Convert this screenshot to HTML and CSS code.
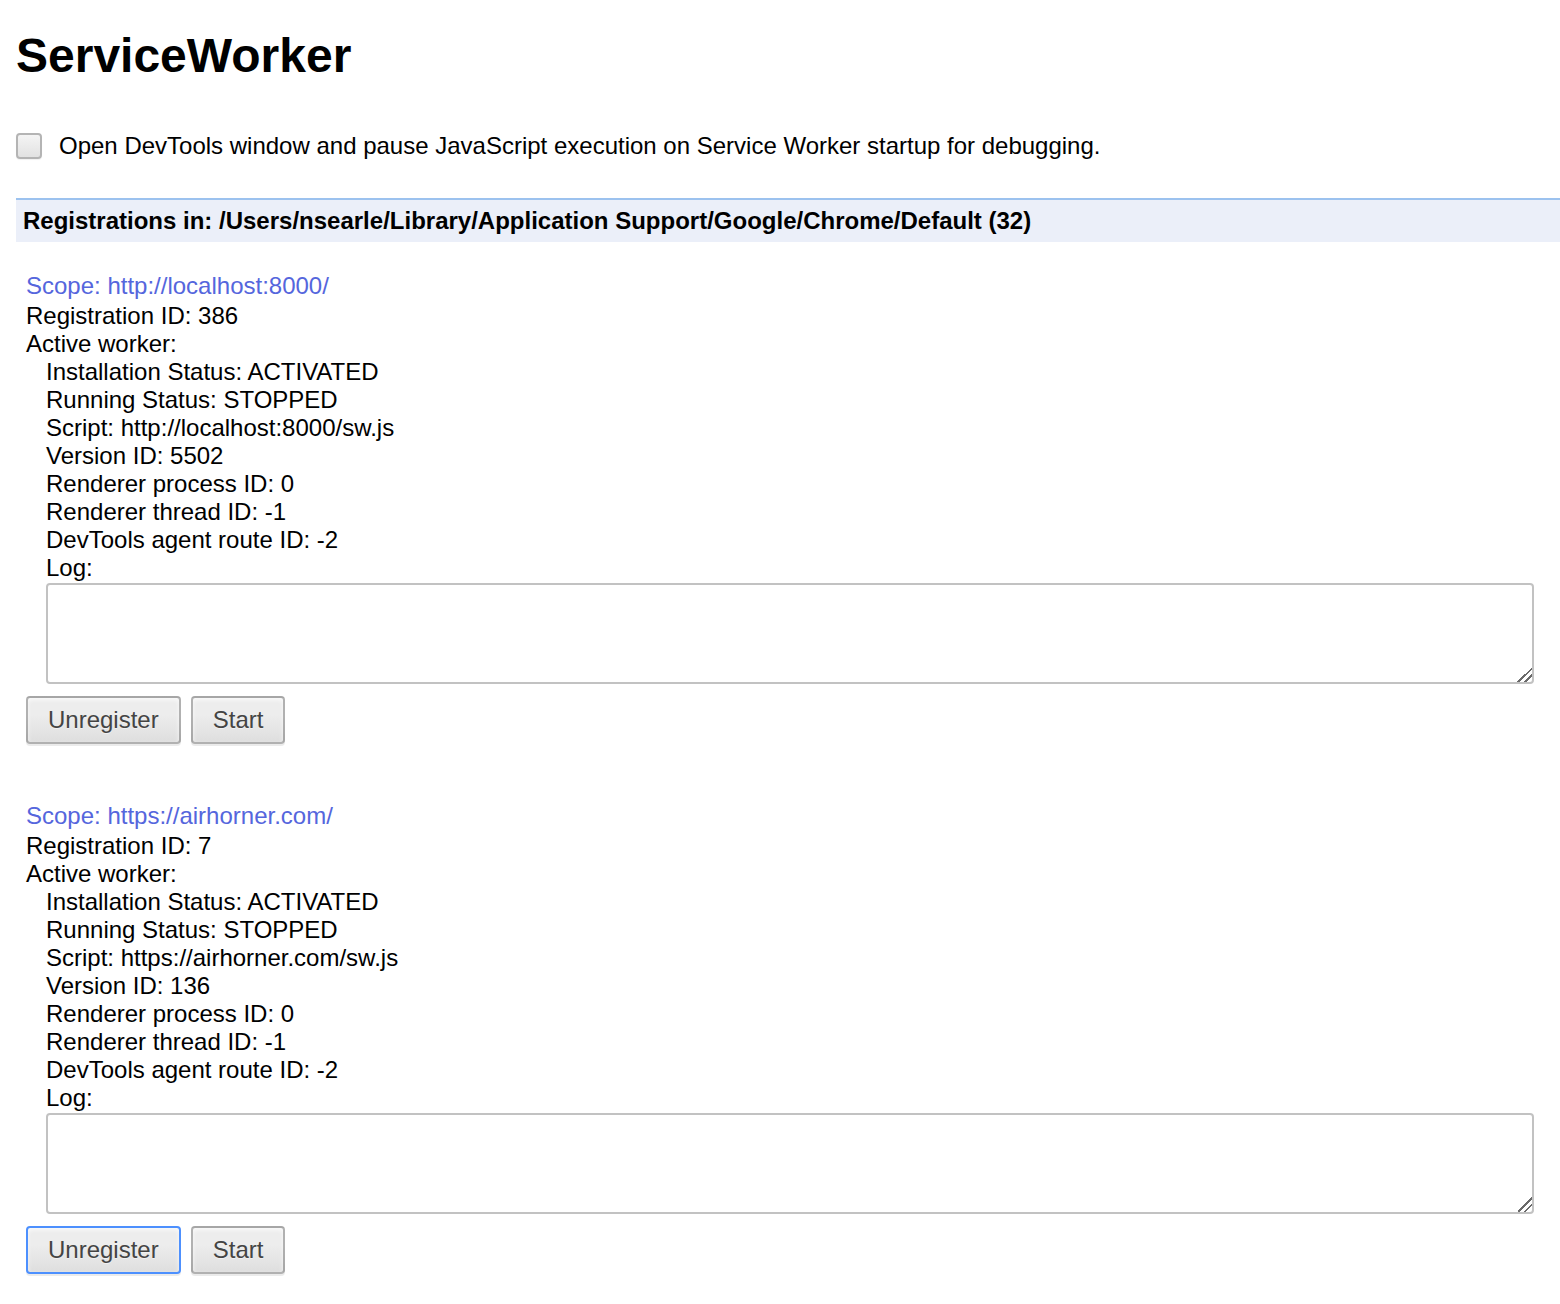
FILE: index.html
```html
<!DOCTYPE html>
<html>
<head>
<meta charset="utf-8">
<title>ServiceWorker</title>
<link rel="stylesheet" href="styles.css">
</head>
<body>
<div class="page">
  <h1 class="title">ServiceWorker</h1>
  <label class="option">
    <input type="checkbox" class="check">
    <span>Open DevTools window and pause JavaScript execution on Service Worker startup for debugging.</span>
  </label>
  <h2 class="band">Registrations in: /Users/nsearle/Library/Application Support/Google/Chrome/Default (32)</h2>
  <div class="registrations">
    <div class="registration">
      <div class="scope">Scope: http://localhost:8000/</div>
      <div class="line">Registration ID: 386</div>
      <div class="line">Active worker:</div>
      <div class="details">
        <div class="line">Installation Status: ACTIVATED</div>
        <div class="line">Running Status: STOPPED</div>
        <div class="line">Script: http://localhost:8000/sw.js</div>
        <div class="line">Version ID: 5502</div>
        <div class="line">Renderer process ID: 0</div>
        <div class="line">Renderer thread ID: -1</div>
        <div class="line">DevTools agent route ID: -2</div>
        <div class="line">Log:</div>
        <textarea class="log"></textarea>
      </div>
      <div class="actions">
        <button class="btn">Unregister</button>
        <button class="btn">Start</button>
      </div>
    </div>
    <div class="registration">
      <div class="scope">Scope: https://airhorner.com/</div>
      <div class="line">Registration ID: 7</div>
      <div class="line">Active worker:</div>
      <div class="details">
        <div class="line">Installation Status: ACTIVATED</div>
        <div class="line">Running Status: STOPPED</div>
        <div class="line">Script: https://airhorner.com/sw.js</div>
        <div class="line">Version ID: 136</div>
        <div class="line">Renderer process ID: 0</div>
        <div class="line">Renderer thread ID: -1</div>
        <div class="line">DevTools agent route ID: -2</div>
        <div class="line">Log:</div>
        <textarea class="log"></textarea>
      </div>
      <div class="actions">
        <button class="btn btn-focus">Unregister</button>
        <button class="btn">Start</button>
      </div>
    </div>
  </div>
</div>
</body>
</html>
```

FILE: styles.css
```css
html, body {
  margin: 0;
  padding: 0;
  background: #fff;
}

body {
  font-family: "Liberation Sans", Arial, Helvetica, sans-serif;
  color: #000;
  font-size: 24px;
}

.page {
  padding-left: 16px;
}

.title {
  margin: 28px 0 0 0;
  font-size: 48px;
  line-height: 56px;
  font-weight: bold;
}

.option {
  display: flex;
  align-items: center;
  height: 28px;
  margin-top: 48px;
  line-height: 28px;
}

.check {
  appearance: none;
  -webkit-appearance: none;
  width: 26px;
  height: 26px;
  margin: 0 17px 0 0;
  border: 2px solid #b4b4b4;
  border-radius: 4px;
  background: linear-gradient(#f4f4f4, #e2e2e2);
  box-shadow: 0 1px 1px rgba(0, 0, 0, 0.06);
  box-sizing: border-box;
}

.band {
  margin: 38px 0 0 0;
  padding: 8px 7px;
  font-size: 24px;
  line-height: 26px;
  font-weight: bold;
  background: rgb(235, 239, 249);
  border-top: 2px solid rgb(156, 194, 239);
}

.registrations {
  padding: 0 26px 0 10px;
}

.registration {
  margin-top: 30px;
  padding-bottom: 28px;
}

.scope {
  color: rgb(85, 102, 221);
  line-height: 28px;
  margin-bottom: 2px;
}

.line {
  line-height: 28px;
}

.details {
  padding-left: 20px;
}

.log {
  display: block;
  width: 100%;
  height: 101px;
  margin: 1px 0 0 0;
  box-sizing: border-box;
  border: 2px solid #c2c2c2;
  border-radius: 4px;
  font-family: "Liberation Mono", monospace;
  font-size: 20px;
  resize: both;
  overflow: auto;
}

.log::-webkit-scrollbar {
  width: 16px;
  height: 16px;
  background: transparent;
}

.log::-webkit-resizer {
  background: linear-gradient(135deg,
    transparent 50%, #6a6a6a 50%, #6a6a6a 58%, transparent 58%,
    transparent 72%, #6a6a6a 72%, #6a6a6a 80%, transparent 80%);
}

.actions {
  display: flex;
  gap: 10px;
  margin-top: 12px;
}

.btn {
  height: 48px;
  padding: 0 20px;
  font-family: "Liberation Sans", Arial, Helvetica, sans-serif;
  font-size: 24px;
  color: #444;
  border: 2px solid rgba(0, 0, 0, 0.25);
  border-radius: 4px;
  background: linear-gradient(#ededed, #ededed 38%, #dedede);
  box-shadow: 0 2px 0 rgba(0, 0, 0, 0.08), inset 0 2px 4px rgba(255, 255, 255, 0.75);
  text-shadow: 0 1px 0 #f0f0f0;
}

.btn-focus {
  border-color: rgb(77, 144, 254);
}
```
